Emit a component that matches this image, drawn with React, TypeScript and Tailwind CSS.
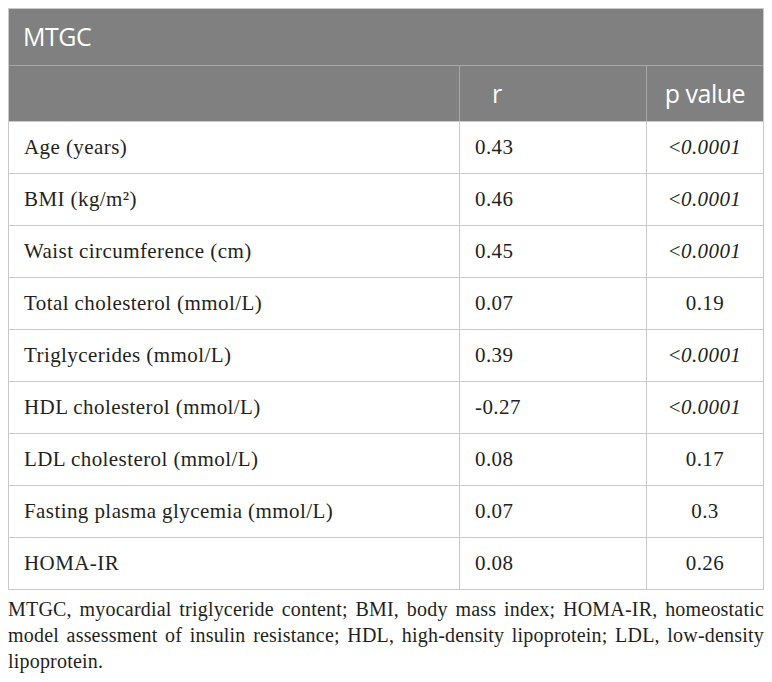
import React from "react";

const rows: { label: React.ReactNode; r: string; p: string; italic?: boolean }[] = [
  { label: "Age (years)", r: "0.43", p: "0.0001", italic: true },
  { label: <>BMI (kg/m²)</>, r: "0.46", p: "0.0001", italic: true },
  { label: "Waist circumference (cm)", r: "0.45", p: "0.0001", italic: true },
  { label: "Total cholesterol (mmol/L)", r: "0.07", p: "0.19" },
  { label: "Triglycerides (mmol/L)", r: "0.39", p: "0.0001", italic: true },
  { label: "HDL cholesterol (mmol/L)", r: "-0.27", p: "0.0001", italic: true },
  { label: "LDL cholesterol (mmol/L)", r: "0.08", p: "0.17" },
  { label: "Fasting plasma glycemia (mmol/L)", r: "0.07", p: "0.3" },
  { label: "HOMA-IR", r: "0.08", p: "0.26" },
];

const App = () => {
  return (
    <div className="min-h-screen bg-white px-[8px] pt-[8px] text-[#231f20]">
      <div className="border border-[#c9c9c9]">
        <div className="flex h-[56px] items-center bg-[#808080] pl-[14px] font-['Open_Sans',sans-serif] text-[25px] tracking-[-0.02em] text-white">
          MTGC
        </div>
        <div className="grid h-[56px] grid-cols-[450px_187px_1fr] border-t border-[#a6a6a6] bg-[#808080] font-['Open_Sans',sans-serif] text-[25px] tracking-[-0.02em] text-white">
          <div />
          <div className="flex items-center border-l border-[#a6a6a6] pl-[32px]">r</div>
          <div className="flex items-center justify-center border-l border-[#a6a6a6]">p value</div>
        </div>
        {rows.map((row, i) => (
          <div
            key={i}
            className="grid h-[52px] grid-cols-[450px_187px_1fr] border-t border-[#c9c9c9] font-['Liberation_Serif',serif] text-[21px] tracking-[0.02em]"
          >
            <div className="flex items-center pl-[15px]">{row.label}</div>
            <div className="flex items-center border-l border-[#c9c9c9] pl-[15px]">{row.r}</div>
            <div className="flex items-center justify-center border-l border-[#c9c9c9]">
              {row.italic ? (
                <span>
                  &lt;<i>{row.p}</i>
                </span>
              ) : (
                row.p
              )}
            </div>
          </div>
        ))}
      </div>
      <p className="mt-[6px] text-justify font-['Liberation_Serif',serif] text-[20px] leading-[26px] tracking-[0.01em]">
        MTGC, myocardial triglyceride content; BMI, body mass index; HOMA-IR, homeostatic model
        assessment of insulin resistance; HDL, high-density lipoprotein; LDL, low-density
        lipoprotein.
      </p>
    </div>
  );
};

export default App;
